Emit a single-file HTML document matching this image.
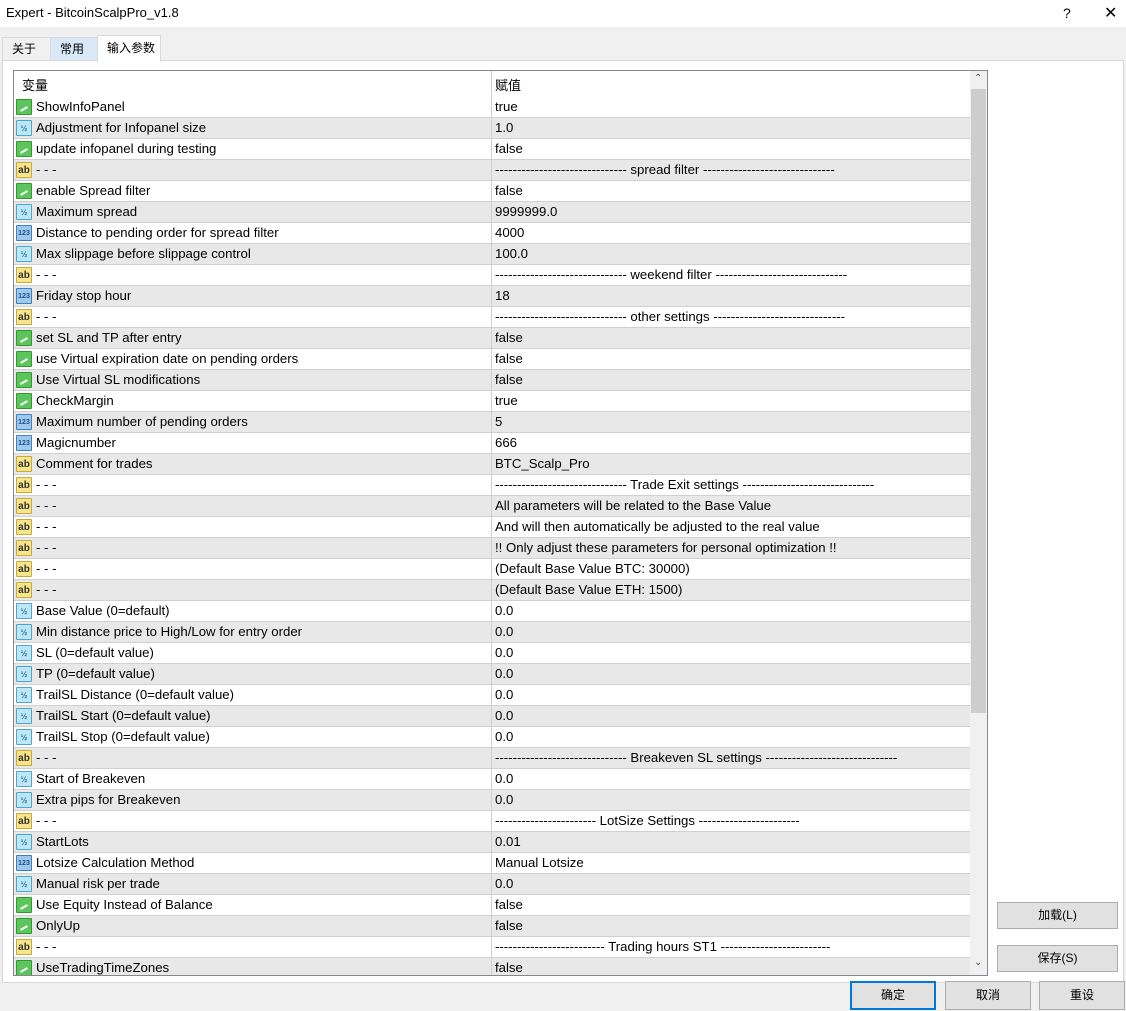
<!DOCTYPE html>
<html><head><meta charset="utf-8"><style>
*{margin:0;padding:0;box-sizing:border-box}
body{width:1126px;height:1011px;background:#f0f0f0;font-family:"Liberation Sans","Noto Sans CJK SC",sans-serif;font-size:13px;color:#000;position:relative;overflow:hidden}
.abs{position:absolute}
#title{left:0;top:0;width:1126px;height:27px;background:#fff}
#title span{position:absolute;top:5px;font-size:13px}
.tab{position:absolute;top:37px;height:24px;line-height:22px;padding-left:9px;font-size:12px;border:1px solid #d9d9d9;border-bottom:none}
#panel{left:2px;top:60px;width:1122px;height:923px;background:#fff;border:1px solid #d9d9d9}
#list{left:13px;top:70px;width:975px;height:906px;border:1px solid #828790;background:#fff;overflow:hidden}
.row{position:absolute;left:0;width:956px;height:21px;border-bottom:1px solid #d0d0d0;line-height:20px;white-space:nowrap;font-size:13.2px}
.row.g{background:#e8e8e8}
.c1{position:absolute;left:22px}
.c2{position:absolute;left:481px}
.div{position:absolute;left:477px;top:0;width:1px;height:906px;background:#d0d0d0}
.ic{position:absolute;left:2px;top:2px;width:16px;height:16px;border-radius:1px;font-size:8px;line-height:15px;text-align:center;font-weight:bold}
.b{background:#5cc65c;border:1px solid #2f9a2f}
.b:after{content:"";position:absolute;left:3px;top:8px;width:8px;height:2px;background:#fff;transform:rotate(-30deg)}
.d{background:#bfe6f5;border:1px solid #4aa8d0;color:#1a6fa0}
.i{background:#9ec9ec;border:1px solid #3f7fbf;color:#1d4e8c;font-size:7px}
.s{background:#f6e58a;border:1px solid #c9a93a;color:#333;font-size:10px}
#sb{left:956px;top:0;width:17px;height:904px;background:#f0f0f0}
#thumb{left:957px;top:18px;width:15px;height:624px;background:#cdcdcd}
.btn{position:absolute;background:#e1e1e1;border:1px solid #adadad;text-align:center;font-size:12px}
</style></head><body>
<div id="title" class="abs"><span style="left:6px">Expert - BitcoinScalpPro_v1.8</span><span style="left:1063px;font-size:14px">?</span><span style="left:1104px;font-size:16px;top:3px">✕</span></div>
<div class="tab" style="left:2px;width:49px;background:#f0f0f0">关于</div>
<div class="tab" style="left:50px;width:48px;background:#d9e9f8">常用</div>
<div class="abs" id="panel"></div>
<div class="tab" style="left:97px;width:64px;top:35px;height:27px;background:#fff;line-height:24px">输入参数</div>
<div class="abs" id="list">
<div class="c1" style="left:8px;top:4px">变量</div><div class="c2" style="top:4px">赋值</div>
<div id="rows"></div>
<div class="div"></div>
<div class="abs" id="sb"></div><div class="abs" id="thumb"></div>
<div class="abs" style="left:960px;top:2px;font-size:10px;color:#555">⌃</div>
<div class="abs" style="left:960px;top:886px;font-size:10px;color:#555">⌄</div>
</div>
<div class="btn" style="left:997px;top:902px;width:121px;height:27px;line-height:25px">加载(L)</div>
<div class="btn" style="left:997px;top:945px;width:121px;height:27px;line-height:25px">保存(S)</div>
<div class="btn" style="left:850px;top:981px;width:86px;height:29px;line-height:25px;border:2px solid #0078d7">确定</div>
<div class="btn" style="left:945px;top:981px;width:86px;height:29px;line-height:27px">取消</div>
<div class="btn" style="left:1039px;top:981px;width:86px;height:29px;line-height:27px">重设</div>
<script>
var D=[
["b","ShowInfoPanel","true"],["d","Adjustment for Infopanel size","1.0"],["b","update infopanel during testing","false"],
["s","- - -","------------------------------ spread filter ------------------------------"],
["b","enable Spread filter","false"],["d","Maximum spread","9999999.0"],["i","Distance to pending order for spread filter","4000"],
["d","Max slippage before slippage control","100.0"],["s","- - -","------------------------------ weekend filter ------------------------------"],
["i","Friday stop hour","18"],["s","- - -","------------------------------ other settings ------------------------------"],
["b","set SL and TP after entry","false"],["b","use Virtual expiration date on pending orders","false"],["b","Use Virtual SL modifications","false"],
["b","CheckMargin","true"],["i","Maximum number of pending orders","5"],["i","Magicnumber","666"],["s","Comment for trades","BTC_Scalp_Pro"],
["s","- - -","------------------------------ Trade Exit settings ------------------------------"],
["s","- - -","All parameters will be related to the Base Value"],["s","- - -","And will then automatically be adjusted to the real value"],
["s","- - -","!! Only adjust these parameters for personal optimization !!"],["s","- - -","(Default Base Value BTC: 30000)"],
["s","- - -","(Default Base Value ETH: 1500)"],["d","Base Value (0=default)","0.0"],["d","Min distance price to High/Low for entry order","0.0"],
["d","SL (0=default value)","0.0"],["d","TP (0=default value)","0.0"],["d","TrailSL Distance (0=default value)","0.0"],
["d","TrailSL Start (0=default value)","0.0"],["d","TrailSL Stop (0=default value)","0.0"],
["s","- - -","------------------------------ Breakeven SL settings ------------------------------"],
["d","Start of Breakeven","0.0"],["d","Extra pips for Breakeven","0.0"],
["s","- - -","----------------------- LotSize Settings -----------------------"],
["d","StartLots","0.01"],["i","Lotsize Calculation Method","Manual Lotsize"],["d","Manual risk per trade","0.0"],
["b","Use Equity Instead of Balance","false"],["b","OnlyUp","false"],
["s","- - -","------------------------- Trading hours ST1 -------------------------"],["b","UseTradingTimeZones","false"]];
var L={b:"",d:"½",i:"123",s:"ab"},h="";
D.forEach(function(r,k){h+='<div class="row'+(k%2?' g':'')+'" style="top:'+(26+21*k)+'px"><span class="ic '+r[0]+'">'+L[r[0]]+'</span><span class="c1">'+r[1]+'</span><span class="c2">'+r[2]+'</span></div>';});
document.getElementById("rows").innerHTML=h;
</script>
</body></html>
